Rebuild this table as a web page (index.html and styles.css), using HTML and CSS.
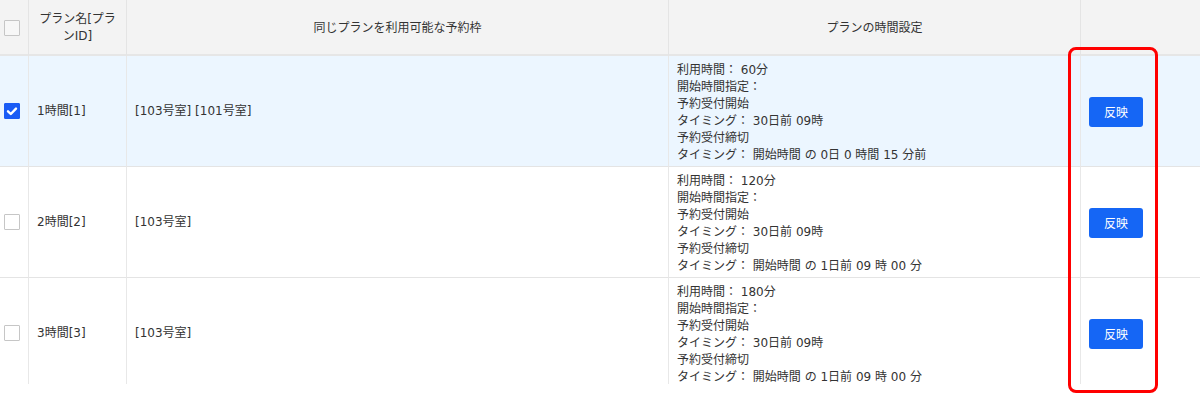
FILE: index.html
```html
<!DOCTYPE html>
<html lang="ja">
<head>
<meta charset="utf-8">
<link rel="stylesheet" href="styles.css">
</head>
<body>
<div class="page">
  <div class="clip">
    <table class="plans">
      <colgroup>
        <col class="c-check"><col class="c-name"><col class="c-rooms"><col class="c-time"><col class="c-act">
      </colgroup>
      <thead>
        <tr>
          <th class="cb-cell"><span class="cb"></span></th>
          <th>プラン名[プランID]</th>
          <th>同じプランを利用可能な予約枠</th>
          <th>プランの時間設定</th>
          <th></th>
        </tr>
      </thead>
      <tbody>
        <tr class="selected">
          <td class="cb-cell"><span class="cb checked"><svg viewBox="0 0 16 16" width="16" height="16"><path d="M4 8.3 L6.8 11 L12 5.6" fill="none" stroke="#fff" stroke-width="2.4" stroke-linecap="round" stroke-linejoin="round"/></svg></span></td>
          <td>1時間[1]</td>
          <td>[103号室] [101号室]</td>
          <td class="time">利用時間： 60分<br>開始時間指定：<br>予約受付開始<br>タイミング： 30日前 09時<br>予約受付締切<br>タイミング： 開始時間 の 0日 0 時間 15 分前</td>
          <td><button class="apply">反映</button></td>
        </tr>
        <tr>
          <td class="cb-cell"><span class="cb"></span></td>
          <td>2時間[2]</td>
          <td>[103号室]</td>
          <td class="time">利用時間： 120分<br>開始時間指定：<br>予約受付開始<br>タイミング： 30日前 09時<br>予約受付締切<br>タイミング： 開始時間 の 1日前 09 時 00 分</td>
          <td><button class="apply">反映</button></td>
        </tr>
        <tr>
          <td class="cb-cell"><span class="cb"></span></td>
          <td>3時間[3]</td>
          <td>[103号室]</td>
          <td class="time">利用時間： 180分<br>開始時間指定：<br>予約受付開始<br>タイミング： 30日前 09時<br>予約受付締切<br>タイミング： 開始時間 の 1日前 09 時 00 分</td>
          <td><button class="apply">反映</button></td>
        </tr>
      </tbody>
    </table>
  </div>
  <div class="highlight"></div>
</div>
</body>
</html>
```
FILE: styles.css
```css
html, body {
  margin: 0;
  padding: 0;
  background: #fff;
}
body {
  font-family: "DejaVu Sans", "Noto Sans CJK JP", sans-serif;
  font-size: 12px;
  line-height: 17px;
  color: #333;
}
.page {
  position: relative;
  width: 1200px;
  height: 394px;
  overflow: hidden;
}
.clip {
  height: 384px;
  overflow: hidden;
}
.plans {
  width: 1200px;
  table-layout: fixed;
  border-collapse: separate;
  border-spacing: 0;
}
.c-check { width: 28px; }
.c-name { width: 98px; }
.c-rooms { width: 542px; }
.c-time { width: 412px; }
.c-act { width: 120px; }

.plans th {
  background: #f3f3f3;
  font-weight: normal;
  text-align: center;
  vertical-align: middle;
  padding: 11px 8px 9px;
  border-bottom: 2px solid #e6e6e6;
  border-left: 1px solid #e4e4e4;
}
.plans td {
  padding: 4px 8px;
  border-bottom: 1px solid #e4e4e4;
  border-left: 1px solid #e8e8e8;
  vertical-align: middle;
  text-align: left;
}
.plans td.time {
  padding: 6px 8px 2px;
}
.plans th:first-child,
.plans td:first-child {
  border-left: none;
}
.plans .cb-cell {
  padding-left: 0;
  padding-right: 0;
  text-align: left;
}
.plans tr.selected td {
  background: #ecf6ff;
}
.cb {
  display: block;
  box-sizing: border-box;
  width: 16px;
  height: 16px;
  margin-left: 4px;
  border: 1px solid #c6c6c6;
  background: #fff;
  border-radius: 1px;
}
th .cb {
  background: #f7f7f7;
}
.cb.checked {
  background: #1a5cf5;
  border-color: #1a5cf5;
  position: relative;
}
.cb.checked svg {
  position: absolute;
  left: -1px;
  top: -1px;
}
.apply {
  display: block;
  width: 54px;
  height: 30px;
  padding: 0;
  border: none;
  border-radius: 3px;
  background: #1566f5;
  color: #fff;
  font-family: "Noto Sans CJK JP", sans-serif;
  font-size: 12px;
  line-height: 30px;
  margin-top: 1px;
}
.highlight {
  position: absolute;
  left: 1068px;
  top: 47px;
  width: 90px;
  height: 346px;
  box-sizing: border-box;
  border: 3px solid #f00;
  border-radius: 8px;
}
```
